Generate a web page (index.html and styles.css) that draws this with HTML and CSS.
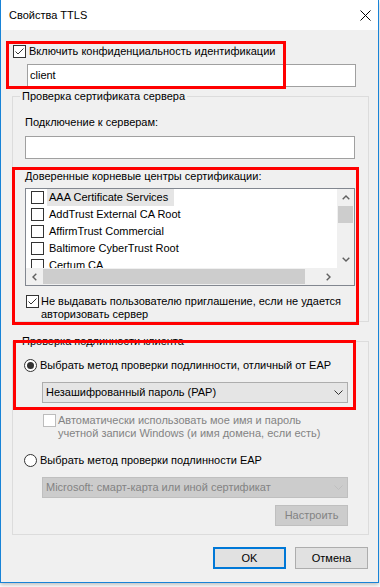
FILE: index.html
```html
<!DOCTYPE html>
<html lang="ru">
<head>
<meta charset="utf-8">
<title>Свойства TTLS</title>
<link rel="stylesheet" href="styles.css">
</head>
<body>
<div class="window">
  <div class="titlebar">
    <span class="title">Свойства TTLS</span>
    <svg class="close" viewBox="0 0 11 11"><path d="M0.5 0.5 L10.5 10.5 M10.5 0.5 L0.5 10.5" stroke="#000" stroke-width="1" fill="none"/></svg>
  </div>
  <div class="content">
    <div class="check-row row-top">
      <span class="cb"><svg viewBox="0 0 11 11"><path d="M1.5 5.5 L4 8 L9.5 2.5" stroke="#333" stroke-width="1" fill="none"/></svg></span>
      <span class="txt">Включить конфиденциальность идентификации</span>
    </div>
    <div class="textbox tb-client">client</div>

    <div class="group g1">
      <div class="legend">Проверка сертификата сервера</div>
      <div class="lbl lbl-servers">Подключение к серверам:</div>
      <div class="textbox tb-servers"></div>
      <div class="lbl lbl-ca">Доверенные корневые центры сертификации:</div>
      <div class="listbox">
        <div class="lb-main">
          <div class="lb-items">
            <div class="lb-row"><span class="cb"></span><span class="lb-text sel">AAA Certificate Services</span></div>
            <div class="lb-row"><span class="cb"></span><span class="lb-text">AddTrust External CA Root</span></div>
            <div class="lb-row"><span class="cb"></span><span class="lb-text">AffirmTrust Commercial</span></div>
            <div class="lb-row"><span class="cb"></span><span class="lb-text">Baltimore CyberTrust Root</span></div>
            <div class="lb-row"><span class="cb"></span><span class="lb-text">Certum CA</span></div>
          </div>
          <div class="vscroll">
            <div class="sb-btn"><svg viewBox="0 0 8 5"><path d="M0.7 4.3 L4 1 L7.3 4.3" stroke="#606060" stroke-width="1.4" fill="none"/></svg></div>
            <div class="v-track"><div class="v-thumb"></div></div>
            <div class="sb-btn"><svg viewBox="0 0 8 5"><path d="M0.7 0.7 L4 4 L7.3 0.7" stroke="#606060" stroke-width="1.4" fill="none"/></svg></div>
          </div>
        </div>
        <div class="lb-bottom">
          <div class="hscroll">
            <div class="sb-btn"><svg class="hv" viewBox="0 0 5 8"><path d="M4.3 0.7 L1 4 L4.3 7.3" stroke="#606060" stroke-width="1.4" fill="none"/></svg></div>
            <div class="h-track"><div class="h-thumb"></div></div>
            <div class="sb-btn"><svg class="hv" viewBox="0 0 5 8"><path d="M0.7 0.7 L4 4 L0.7 7.3" stroke="#606060" stroke-width="1.4" fill="none"/></svg></div>
          </div>
          <div class="sb-corner"></div>
        </div>
      </div>
      <div class="check-row row-prompt">
        <span class="cb"><svg viewBox="0 0 11 11"><path d="M1.5 5.5 L4 8 L9.5 2.5" stroke="#333" stroke-width="1" fill="none"/></svg></span>
        <span class="txt">Не выдавать пользователю приглашение, если не удается<br>авторизовать сервер</span>
      </div>
    </div>

    <div class="group g2">
      <div class="legend">Проверка подлинности клиента</div>
      <div class="radio-row rr1">
        <span class="radio on"></span>
        <span class="txt">Выбрать метод проверки подлинности, отличный от EAP</span>
      </div>
      <div class="combo combo1">
        <span>Незашифрованный пароль (PAP)</span>
        <svg viewBox="0 0 9 5"><path d="M0.5 0.5 L4.5 4.5 L8.5 0.5" stroke="#333" stroke-width="1" fill="none"/></svg>
      </div>
      <div class="check-row row-auto disabled">
        <span class="cb cb-dis"></span>
        <span class="txt">Автоматически использовать мое имя и пароль<br>учетной записи Windows (и имя домена, если есть)</span>
      </div>
      <div class="radio-row rr2">
        <span class="radio"></span>
        <span class="txt">Выбрать метод проверки подлинности EAP</span>
      </div>
      <div class="combo combo2">
        <span>Microsoft: смарт-карта или иной сертификат</span>
        <svg viewBox="0 0 9 5"><path d="M0.5 0.5 L4.5 4.5 L8.5 0.5" stroke="#bfbfbf" stroke-width="1" fill="none"/></svg>
      </div>
      <div class="btn btn-dis btn-cfg">Настроить</div>
    </div>

    <div class="buttons">
      <div class="btn btn-ok">OK</div>
      <div class="btn">Отмена</div>
    </div>
  </div>

  <div class="annot a1"></div>
  <div class="annot a2"></div>
  <div class="annot a3"></div>
</div>
</body>
</html>
```

FILE: styles.css
```css
* { box-sizing: border-box; }
html, body { margin: 0; padding: 0; }
body {
  width: 380px;
  height: 587px;
  overflow: hidden;
  background: #ffffff;
  font-family: "Liberation Sans", Arial, sans-serif;
  font-size: 11px;
  line-height: 13px;
  color: #000;
  white-space: nowrap;
}
.window {
  position: relative;
  width: 379px;
  border: 1px solid #1883d7;
  border-top: none;
  box-shadow: 0 2px 4px rgba(0,0,0,0.25);
}
.titlebar {
  height: 30px;
  background: #ffffff;
  display: flex;
  align-items: center;
  justify-content: space-between;
  padding: 0 7px 0 8px;
}
.title { font-size: 11px; }
.close { width: 11px; height: 11px; display: block; }

.content {
  height: 552px;
  background: #f0f0f0;
  padding: 15px 9px 0 11px;
  display: flex;
  flex-direction: column;
  align-items: flex-start;
}

.check-row, .radio-row { display: flex; align-items: flex-start; gap: 3px; }
.cb {
  width: 13px; height: 13px; flex: none;
  border: 1px solid #333333;
  background: #ffffff;
  display: flex; align-items: center; justify-content: center;
}
.cb svg { width: 11px; height: 11px; display: block; }
.cb-dis { border-color: #bcbcbc; }
.disabled .txt { color: #838383; }

.row-top { margin-left: 1px; }
.textbox {
  background: #ffffff;
  border: 1px solid #a0a0a0;
  height: 23px;
  line-height: 20px;
  padding-left: 2px;
}
.tb-client { margin: 6px 0 0 15px; width: 329px; }

.group {
  position: relative;
  width: 357px;
  border: 1px solid #dcdcdc;
  display: flex;
  flex-direction: column;
  align-items: flex-start;
}
.g1 { margin-top: 9px; }
.g2 { margin-top: 19px; padding-bottom: 8px; }
.legend {
  margin: -7px 0 0 7px;
  padding: 0 2px;
  background: #f0f0f0;
}
.lbl { margin-left: 12px; }
.lbl-servers { margin-top: 13px; }
.tb-servers { margin: 7px 0 0 12px; width: 330px; }
.lbl-ca { margin-top: 11px; }

.listbox {
  margin: 5px 0 0 12px;
  width: 330px;
  height: 98px;
  border: 1px solid #828790;
  background: #ffffff;
  display: flex;
  flex-direction: column;
}
.lb-main { display: flex; height: 79px; }
.lb-items { width: 311px; height: 79px; overflow: hidden; }
.lb-row { height: 17px; display: flex; align-items: center; padding-left: 5px; }
.lb-text { margin-left: 3px; padding: 0 2px; line-height: 17px; height: 17px; }
.lb-text.sel { background: #e5e5e5; padding-right: 6px; }
.vscroll { width: 17px; height: 79px; background: #f0f0f0; display: flex; flex-direction: column; }
.sb-btn { width: 17px; height: 17px; flex: none; display: flex; align-items: center; justify-content: center; }
.sb-btn svg { width: 8px; height: 5px; display: block; }
.sb-btn svg.hv { width: 5px; height: 8px; }
.v-track { flex: 1; }
.v-thumb { width: 15px; height: 17px; margin: 0 auto; background: #cdcdcd; }
.lb-bottom { display: flex; height: 17px; }
.hscroll { width: 311px; height: 17px; background: #f0f0f0; display: flex; }
.h-track { flex: 1; display: flex; align-items: center; }
.h-thumb { width: 262px; height: 15px; background: #cdcdcd; margin-left: 0; }
.sb-corner { width: 17px; height: 17px; background: #f0f0f0; }

.row-prompt { margin: 9px 0 0 13px; gap: 2px; }

.radio {
  width: 13px; height: 13px; flex: none;
  border: 1px solid #333333;
  border-radius: 50%;
  background: #ffffff;
  display: flex; align-items: center; justify-content: center;
}
.radio.on::after {
  content: "";
  width: 7px; height: 7px;
  border-radius: 50%;
  background: #333333;
}
.rr1 { margin: 11px 0 0 11px; }
.combo {
  width: 306px;
  height: 21px;
  margin-left: 29px;
  border: 1px solid #adadad;
  background: #e5e5e5;
  display: flex;
  align-items: center;
  justify-content: space-between;
  padding: 0 4px 0 3px;
}
.combo svg { width: 9px; height: 5px; display: block; }
.combo1 { margin-top: 10px; }
.row-auto { margin: 11px 0 0 30px; gap: 2px; }
.rr2 { margin: 14px 0 0 11px; }
.combo2 { margin-top: 10px; background: #cccccc; border-color: #bfbfbf; color: #838383; }

.btn {
  width: 73px;
  height: 22px;
  border: 1px solid #adadad;
  background: #e1e1e1;
  display: flex;
  align-items: center;
  justify-content: center;
}
.btn-dis { background: #cccccc; border-color: #bfbfbf; color: #838383; }
.btn-cfg { height: 21px; margin: 7px 0 0 262px; }
.btn-ok { border: 2px solid #0078d7; }
.buttons {
  align-self: stretch;
  display: flex;
  justify-content: flex-end;
  gap: 9px;
  margin-top: 12px;
  padding-right: 1px;
}

.annot { position: absolute; border: 3px solid #ff0000; pointer-events: none; }
.a1 { left: 5px; top: 41px; width: 280px; height: 48px; }
.a2 { left: 11px; top: 167px; width: 347px; height: 158px; }
.a3 { left: 12px; top: 340px; width: 343px; height: 70px; }
```
